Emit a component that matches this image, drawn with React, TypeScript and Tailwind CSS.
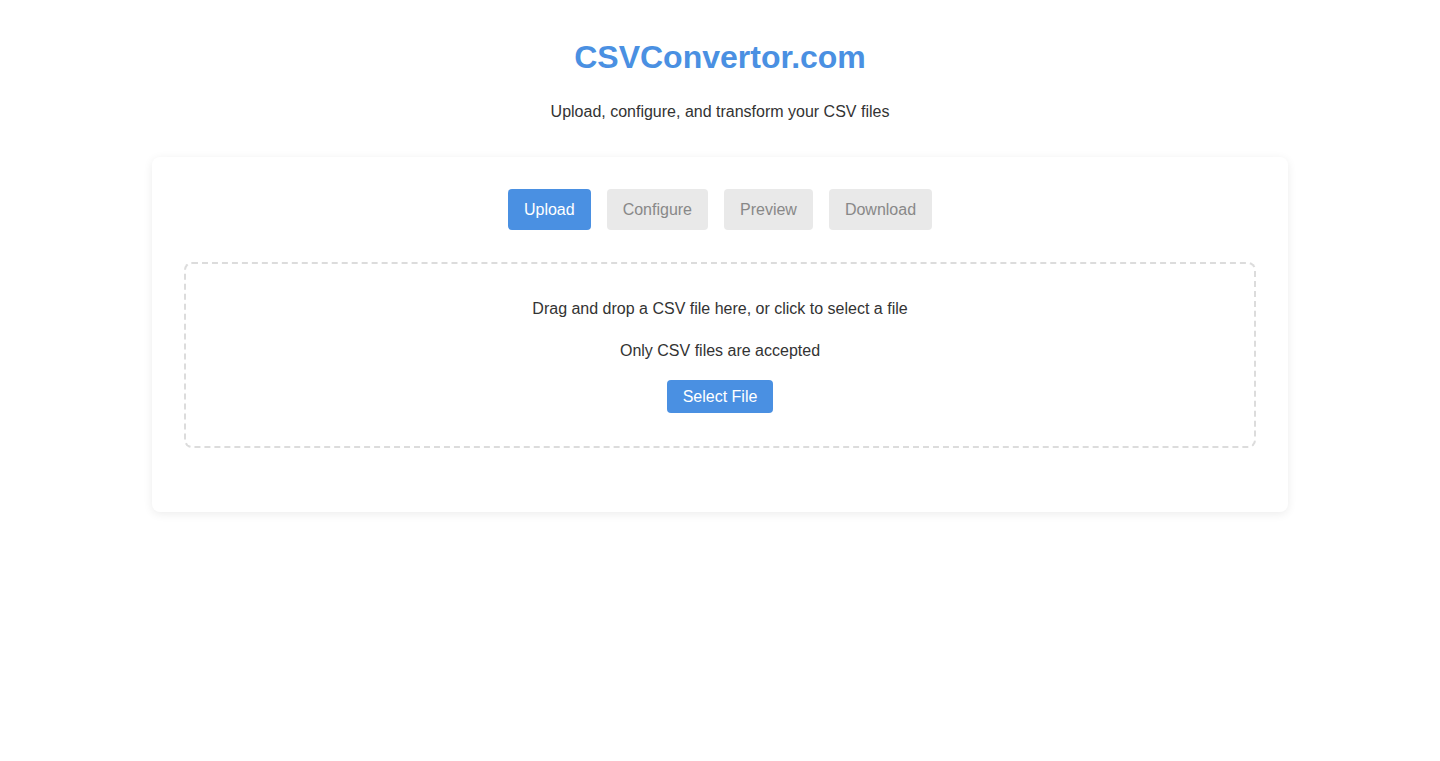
import { useState } from "react";

const steps = ["Upload", "Configure", "Preview", "Download"];

const App = () => {
  const [step, setStep] = useState(0);

  return (
    <div className="min-h-screen bg-white font-['Liberation_Sans',Arial,sans-serif] text-[#333]">
      <div className="mx-auto w-[1136px] pt-[39px]">
        <h1 className="text-center text-[32px] font-bold leading-[37px] text-[#4a90e2]">
          CSVConvertor.com
        </h1>
        <p className="mt-[27px] text-center text-base leading-[18px]">
          Upload, configure, and transform your CSV files
        </p>

        <div className="mt-[36px] rounded-lg bg-white p-8 pb-16 shadow-[0_2px_10px_rgba(0,0,0,0.08)]">
          <div className="flex justify-center gap-4">
            {steps.map((s, i) => (
              <button
                key={s}
                onClick={() => setStep(i)}
                className={
                  i === step
                    ? "h-[41px] rounded px-4 text-base bg-[#4a90e2] text-white"
                    : "h-[41px] rounded px-4 text-base bg-[#e9e9e9] text-[#888]"
                }
              >
                {s}
              </button>
            ))}
          </div>

          <div className="mt-8 rounded-lg border-2 border-dashed border-[#dcdcdc] px-8 pt-8 pb-[33px] text-center">
            <p className="leading-[26px]">
              Drag and drop a CSV file here, or click to select a file
            </p>
            <p className="mt-4 leading-[26px]">Only CSV files are accepted</p>
            <button className="mt-4 h-[33px] rounded bg-[#4a90e2] px-4 text-base text-white">
              Select File
            </button>
          </div>
        </div>
      </div>
    </div>
  );
};

export default App;
